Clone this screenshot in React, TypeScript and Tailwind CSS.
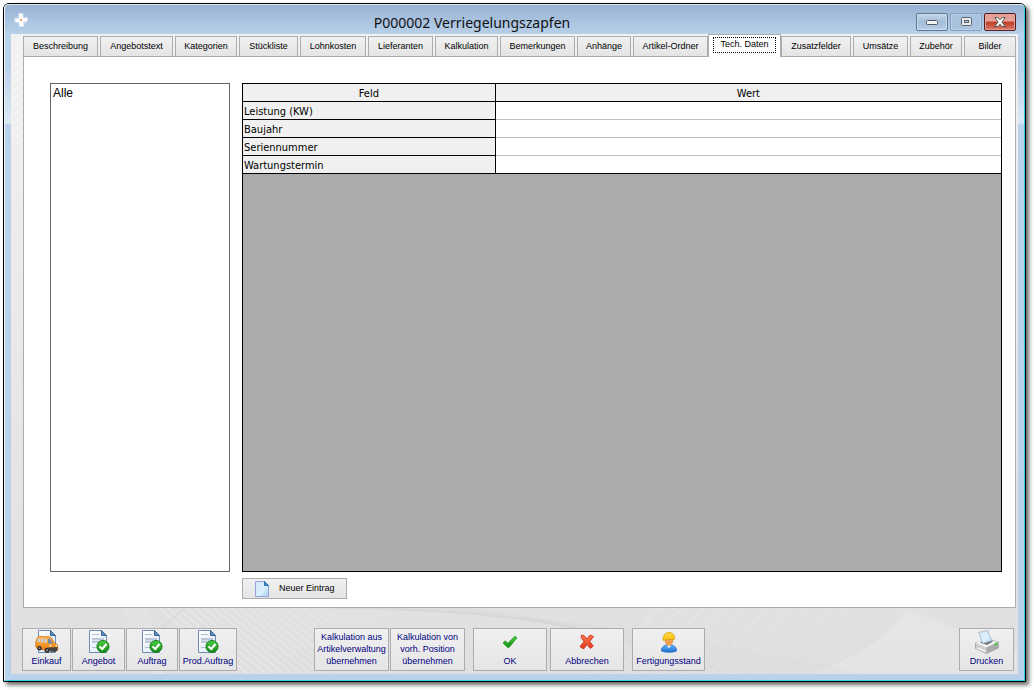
import { useState } from 'react'
import type { ReactNode } from 'react'

const TABS = [
  { label: 'Beschreibung', width: 'basis-[75px]' },
  { label: 'Angebotstext', width: 'basis-[73px]' },
  { label: 'Kategorien', width: 'basis-[62px]' },
  { label: 'Stückliste', width: 'basis-[59px]' },
  { label: 'Lohnkosten', width: 'basis-[66px]' },
  { label: 'Lieferanten', width: 'basis-[65px]' },
  { label: 'Kalkulation', width: 'basis-[63px]' },
  { label: 'Bemerkungen', width: 'basis-[75px]' },
  { label: 'Anhänge', width: 'basis-[54px]' },
  { label: 'Artikel-Ordner', width: 'basis-[75px]' },
  { label: 'Tech. Daten', width: 'basis-[73px]' },
  { label: 'Zusatzfelder', width: 'basis-[70px]' },
  { label: 'Umsätze', width: 'basis-[55px]' },
  { label: 'Zubehör', width: 'basis-[52px]' },
  { label: 'Bilder', width: 'basis-[52px]' },
]

const FIELDS = ['Leistung (KW)', 'Baujahr', 'Seriennummer', 'Wartungstermin']

const SMALL = "font-['Liberation_Sans',sans-serif] text-[9px]"

function AppIcon() {
  return (
    <svg width="14" height="16" viewBox="0 0 14 16" className="shrink-0">
      <path d="M4.500 1h4.500l1 5 4-1v5l-3 1-1 4H5l-1-4-4-1V6l4-1z" fill="#dce8f3" opacity=".7" />
      <path d="M5 2l3.500-.5.5 4.500 4-.5V9l-4 .5.500 4.500-3.500.5-.5-4.500-4 .5V7l4-.5z" fill="#fff" />
      <circle cx="7" cy="8" r="1" fill="#e8792b" />
    </svg>
  )
}

function Sheet() {
  return (
    <>
      <path d="M1.500.5h12l5 5v17h-17z" fill="url(#sheet)" stroke="#6c8cb4" />
      <path d="M13.500.5v5h5z" fill="#5b8fc4" stroke="#3c6493" />
    </>
  )
}

function Gradients() {
  return (
    <svg width="0" height="0" className="absolute" aria-hidden="true">
      <defs>
        <linearGradient id="sheet" x1="0" y1="0" x2="1" y2="1">
          <stop offset="0" stopColor="#ffffff" />
          <stop offset="1" stopColor="#dbe7f5" />
        </linearGradient>
        <linearGradient id="page" x1="0" y1="0" x2="1" y2="1">
          <stop offset="0" stopColor="#d9e6f6" />
          <stop offset=".6" stopColor="#d9f0fd" />
          <stop offset="1" stopColor="#9fcdf3" />
        </linearGradient>
        <linearGradient id="van" x1="0" y1="0" x2="0" y2="1">
          <stop offset="0" stopColor="#ffb84a" />
          <stop offset="1" stopColor="#ee7a10" />
        </linearGradient>
        <linearGradient id="green" x1="0" y1="0" x2="0" y2="1">
          <stop offset="0" stopColor="#4fce45" />
          <stop offset="1" stopColor="#128a18" />
        </linearGradient>
        <linearGradient id="red" x1="0" y1="0" x2="0" y2="1">
          <stop offset="0" stopColor="#ff7a4c" />
          <stop offset="1" stopColor="#e0351a" />
        </linearGradient>
        <linearGradient id="shirt" x1="0" y1="0" x2="0" y2="1">
          <stop offset="0" stopColor="#5fb2f5" />
          <stop offset="1" stopColor="#1c6fd0" />
        </linearGradient>
      </defs>
    </svg>
  )
}

function DocumentCheckIcon() {
  return (
    <svg width="22" height="24" viewBox="0 0 22 24">
      <Sheet />
      <path d="M4 4.500h7M4 17.500h5" stroke="#b4c1d4" />
      <rect x="4" y="8" width="12" height="5" fill="#bcc7da" />
      <path d="M4 10.500h12" stroke="#d9e1ec" />
      <circle cx="15" cy="16.500" r="6" fill="url(#green)" stroke="#0d7a14" />
      <path d="M11.500 16.500l2.800 2.500 4.200-5" fill="none" stroke="#fff" strokeWidth="2.200" />
    </svg>
  )
}

function VanIcon() {
  return (
    <svg width="24" height="24" viewBox="0 0 24 24">
      <g transform="translate(2 0)">
        <Sheet />
      </g>
      <path
        d="M.8 12L2.500 7.500Q3 6.500 4.500 6.400L14 6.800q1.500 0 2.500 1.200l3 5 2.500 1.500q.8 1 .7 2.500v3L20 21.500 3 19 .8 17z"
        fill="url(#van)"
        stroke="#c8660c"
        strokeWidth=".7"
      />
      <path d="M3 8.500h2v3.500H2.200zM6 8.600h2.500V12.500H5.700zM9.500 8.800h2.300v4H9.300z" fill="#c7cfe0" />
      <path d="M13 8.800h2l3.200 4.700H13z" fill="#6f86a8" />
      <path d="M13 17.500l9.500-.5v3.500L20 22l-5-.5z" fill="#454545" />
      <circle cx="4.500" cy="18.200" r="2.300" fill="#2b2b2b" />
      <circle cx="4.500" cy="18.200" r=".9" fill="#9a9a9a" />
      <circle cx="12" cy="20.300" r="2.500" fill="#2b2b2b" />
      <circle cx="12" cy="20.300" r="1" fill="#9a9a9a" />
      <path d="M14.500 15.500l2 .3M20.500 15.800h1.500" stroke="#fff3b0" strokeWidth="1.500" />
    </svg>
  )
}

function PageIcon() {
  return (
    <svg width="14" height="16" viewBox="0 0 14 16">
      <path d="M.5.5h9l4 4v11H.5z" fill="url(#page)" stroke="#9aa2dc" />
      <path d="M9.500.5v4h4z" fill="#3f94cf" stroke="#2f6fae" />
    </svg>
  )
}

function CheckIcon() {
  return (
    <svg width="16" height="14" viewBox="0 0 16 14">
      <path
        d="M1 8l2-2.200 3 2.400L12.800 1.200l2.200 1.600-8 9.700H5.800z"
        fill="url(#green)"
        stroke="#1a9d1c"
        strokeWidth=".8"
        strokeLinejoin="round"
      />
    </svg>
  )
}

function CrossIcon() {
  return (
    <svg width="16" height="16" viewBox="0 0 16 16">
      <path
        d="M2.500 1.200l2.500.3L8 5l3-4 3.500 1.500L10.800 7.500l3.500 4.500-2.800 2.500L8 10.500 4.500 15 1 12.500l4-5L2 3.500z"
        fill="url(#red)"
        stroke="#c3260f"
        strokeWidth=".8"
        strokeLinejoin="round"
      />
    </svg>
  )
}

function WorkerIcon() {
  return (
    <svg width="18" height="21" viewBox="0 0 18 21">
      <path d="M1.500 19c-.5-3 2-5.500 5-6h5c3 .5 5.500 3 5 6-4 1.700-11 1.700-15 0z" fill="url(#shirt)" stroke="#1c62b8" strokeWidth=".7" />
      <path d="M6.500 12.500h5L9 16.500z" fill="#e8f2fc" />
      <path d="M5 6.500h8c.3 4-1.500 7-4 7s-4.300-3-4-7z" fill="#f2a050" stroke="#c97a2c" strokeWidth=".5" />
      <path d="M3 8.500C2.700 4 5 .5 9 .5c4 0 6.300 3 5.500 7-3-.5-7-.5-11.500 1z" fill="#fbcb1f" stroke="#d29a0c" strokeWidth=".7" />
      <path d="M7 1.500l-.5 3M10 1.500v3" stroke="#ffe97a" />
    </svg>
  )
}

function PrinterIcon() {
  return (
    <svg width="26" height="24" viewBox="0 0 26 24">
      <path d="M1.500 13l10-4 13 3v6l-12 5.500-11-5z" fill="#cdcdcd" stroke="#8a8a8a" strokeWidth=".6" />
      <path d="M1.500 13l7-3.500 16 2.500-12 5.500z" fill="#f2f2f2" />
      <path d="M12.500 17.500l12-5.500v6l-12 5.500z" fill="#a9a9a9" />
      <path d="M6 12.500l7 2.500 6-3.500-7-2z" fill="#6a737c" />
      <path d="M4.500 2.500L14 .5c.5 4 1.500 7 4.500 10L9 13.500C6.500 10 7 6 4.500 2.500z" fill="url(#page)" stroke="#8c9cb0" strokeWidth=".6" />
      <path d="M3 18l8.500 3.500" stroke="#f5f5f5" strokeWidth="1.500" />
      <path d="M20.500 14.500l2.500-1" stroke="#2ed32e" strokeWidth="2" />
    </svg>
  )
}

// faint crossing lines behind the bottom tool bar
function Pattern() {
  const steps = Array.from({ length: 30 }, (_, i) => i)
  return (
    <svg
      className="absolute inset-0 -z-10 h-full w-full"
      viewBox="0 0 1007 65"
      preserveAspectRatio="none"
      fill="none"
      aria-hidden="true"
    >
      <path d="M895 0l112 45V65H800C840 50 880 30 895 0z" fill="#e7e7e7" opacity=".6" />
      <g stroke="#ebebeb">
        {steps.map((i) => (
          <path key={i} d={`M${148 + i * 9} 0l80 65`} opacity={1 - i / 32} />
        ))}
        {steps.slice(0, 9).map((i) => (
          <path key={i} d={`M${112 + i * 3} 0l${32 - i * 2} 65`} opacity=".6" />
        ))}
        {steps.slice(0, 12).map((i) => (
          <path key={i} d={`M${650 + i * 21} 0l${-70 + i * 3} 65`} opacity={1 - i / 13} />
        ))}
      </g>
      <g stroke="#d6d6d6">
        <path d="M150 20L174 0" />
        {steps.slice(0, 14).map((i) => (
          <path key={i} d={`M${300 + i * 12} 0C${480 + i * 8} ${i} 600 ${14 + i * 2} ${850 - i * 9} 65`} opacity=".3" />
        ))}
      </g>
    </svg>
  )
}

// diagonal stripes along the upper left edge
function EdgePattern() {
  const steps = Array.from({ length: 14 }, (_, i) => i)
  return (
    <svg className="absolute left-0 top-0 -z-10" width="12" height="110" fill="none" aria-hidden="true">
      {steps.map((i) => (
        <path key={i} d={`M0 ${10 + i * 8}l12-8`} stroke="#fafafa" />
      ))}
    </svg>
  )
}

interface ToolButtonProps {
  width: string
  icon?: ReactNode
  children: ReactNode
}

function ToolButton({ width, icon, children }: ToolButtonProps) {
  return (
    <button
      className={`${SMALL} ${width} flex h-[43px] shrink-0 flex-col items-center justify-end whitespace-nowrap border border-[#acacac] bg-gradient-to-b from-[#f0f0f0] to-[#e5e5e5] pb-[3px] leading-3 text-[#000080]`}
    >
      {icon && <span className="flex flex-1 items-center justify-center">{icon}</span>}
      <span>{children}</span>
    </button>
  )
}

function TitleBar() {
  return (
    <header className="flex h-[29px] items-center pl-[9px] pr-2">
      <AppIcon />
      <h1 className="flex-1 pt-1.5 text-center font-['Noto_Sans',sans-serif] text-[14px] leading-5 text-[#111]">
        P000002 Verriegelungszapfen
      </h1>
      <div className="flex gap-0.5 pt-1">
        <button
          aria-label="Minimieren"
          className="flex h-[18px] w-8 items-center justify-center rounded-xs border border-[#5f7895] bg-gradient-to-b from-[#c3d5e8] via-[#a5bdd7] to-[#b7cfe8] pt-0.5 shadow-[inset_0_0_0_1px_#c8daec]"
        >
          <svg width="12" height="5" viewBox="0 0 12 5">
            <rect x=".5" y=".5" width="11" height="4" rx="1" fill="#f4f4f4" stroke="#4e5461" />
          </svg>
        </button>
        <button
          aria-label="Maximieren"
          className="flex h-[18px] w-8 items-center justify-center rounded-xs border border-[#84a0c0] bg-[#a9c2de] shadow-[inset_0_0_0_1px_#bcd1e8]"
        >
          <svg width="11" height="9" viewBox="0 0 11 9">
            <rect x=".5" y=".5" width="10" height="8" rx="1" fill="#e8e8e8" stroke="#5b6472" />
            <rect x="3.500" y="3.500" width="4" height="2" fill="#a9c2de" stroke="#5b6472" />
          </svg>
        </button>
        <button
          aria-label="Schließen"
          className="flex h-[18px] w-8 items-center justify-center rounded-xs border border-[#5a1a24] bg-gradient-to-b from-[#e5a196] from-45% via-[#bc3a26] via-50% to-[#d97a66] shadow-[inset_0_0_0_1px_#e0a094]"
        >
          <svg width="12" height="10" viewBox="0 0 12 10">
            <path
              d="M.8.5h3L6 2.800 8.200.5h3L8 5l3.200 4.500h-3L6 7.200 3.800 9.500h-3L4 5z"
              fill="#f5f5f5"
              stroke="#4a4f5e"
              strokeWidth=".9"
            />
          </svg>
        </button>
      </div>
    </header>
  )
}

export default function App() {
  const [active, setActive] = useState('Tech. Daten')

  return (
    <div className="flex min-h-screen flex-col bg-white pb-2 pl-[3px] pr-2 pt-[3px]">
      <Gradients />
      <div className="flex flex-1 flex-col rounded-t-md border border-black shadow-[3px_3px_4px_0px_rgba(0,0,0,0.6)]">
        <div className="flex flex-1 flex-col rounded-t-[5px] border border-b-[#2fd3e6] border-l-[#eef4fa] border-r-[#2fd3e6] border-t-[#dce8f4] bg-[#b9d1ea] bg-[linear-gradient(#98b2d2,#b9d1ea_30px,#b9d1ea_60px,#dce8f5_118px,#b9d1ea_120px)]">
          <TitleBar />
          <main className="relative isolate mx-1.5 mb-1.5 flex flex-1 flex-col bg-gradient-to-b from-[#f2f2f2] to-[#dfdfdf]">
            <EdgePattern />
            <nav role="tablist" className="flex h-[22px] items-end gap-0.5 pl-3 pr-0.5">
              {TABS.map((tab) =>
                tab.label === active ? (
                  <button
                    key={tab.label}
                    role="tab"
                    aria-selected="true"
                    className={`${SMALL} ${tab.width} z-10 -mx-0.5 -mb-px h-[23px] min-w-0 grow whitespace-nowrap border border-b-0 border-[#acacac] bg-white px-1 pb-1 pt-0.5`}
                  >
                    <span className="flex h-full items-center justify-center border border-dotted border-black">
                      {tab.label}
                    </span>
                  </button>
                ) : (
                  <button
                    key={tab.label}
                    role="tab"
                    aria-selected="false"
                    onClick={() => setActive(tab.label)}
                    className={`${SMALL} ${tab.width} h-5 min-w-0 grow whitespace-nowrap border border-b-0 border-[#acacac] bg-gradient-to-b from-[#f1f1f1] to-[#e4e4e4] pt-px`}
                  >
                    {tab.label}
                  </button>
                ),
              )}
            </nav>

            <section
              role="tabpanel"
              className="ml-3 mr-0.5 grid flex-1 grid-cols-[180px_1fr] grid-rows-[1fr_auto] gap-x-3 gap-y-1.5 border border-[#acacac] bg-white pb-2 pl-[26px] pr-[13px] pt-[26px] font-['DejaVu_Sans_Condensed','Noto_Sans',sans-serif] text-[11px]"
            >
              <ul className="border border-[#646464] px-0.5 py-px font-['Liberation_Sans',sans-serif] text-xs leading-4">
                <li>Alle</li>
              </ul>

              <div className="border border-black bg-[#ababab]">
                <table className="w-full table-fixed border-separate border-spacing-0 leading-[15px]">
                  <thead>
                    <tr>
                      <th className="h-[18px] w-1/3 border-b border-r border-black bg-[#f0f0f0] p-0 pt-0.5 font-normal">
                        Feld
                      </th>
                      <th className="border-b border-black bg-[#f0f0f0] p-0 pt-0.5 font-normal">Wert</th>
                    </tr>
                  </thead>
                  <tbody>
                    {FIELDS.map((field) => (
                      <tr key={field} className="group">
                        <th className="h-[18px] border-b border-r border-black bg-[#f0f0f0] p-0 pl-px pt-0.5 text-left font-normal">
                          {field}
                        </th>
                        <td className="border-b border-[#c0c0c0] bg-white p-0 group-last:border-black" />
                      </tr>
                    ))}
                  </tbody>
                </table>
              </div>

              <button
                className={`${SMALL} col-start-2 flex h-[21px] w-[105px] items-center gap-2.5 border border-[#acacac] bg-gradient-to-b from-[#f1f1f1] to-[#e4e4e4] pl-3`}
              >
                <PageIcon />
                Neuer Eintrag
              </button>
            </section>

            <footer className="relative isolate flex h-[66px] items-end pb-[3px] pl-[11px] pr-1">
              <Pattern />
              <div className="flex gap-px">
                <ToolButton width="w-[49px]" icon={<VanIcon />}>Einkauf</ToolButton>
                <ToolButton width="w-[53px]" icon={<DocumentCheckIcon />}>Angebot</ToolButton>
                <ToolButton width="w-[52px]" icon={<DocumentCheckIcon />}>Auftrag</ToolButton>
                <ToolButton width="w-[58px]" icon={<DocumentCheckIcon />}>Prod.Auftrag</ToolButton>
              </div>
              <div className="ml-[77px] flex gap-px">
                <ToolButton width="w-[75px]">
                  Kalkulation aus
                  <br />
                  Artikelverwaltung
                  <br />
                  übernehmen
                </ToolButton>
                <ToolButton width="w-[75px]">
                  Kalkulation von
                  <br />
                  vorh. Position
                  <br />
                  übernehmen
                </ToolButton>
              </div>
              <div className="ml-2 flex gap-[3px]">
                <ToolButton width="w-[74px]" icon={<CheckIcon />}>OK</ToolButton>
                <ToolButton width="w-[74px]" icon={<CrossIcon />}>Abbrechen</ToolButton>
              </div>
              <div className="ml-2 flex">
                <ToolButton width="w-[73px]" icon={<WorkerIcon />}>Fertigungsstand</ToolButton>
              </div>
              <div className="ml-auto flex">
                <ToolButton width="w-[55px]" icon={<PrinterIcon />}>Drucken</ToolButton>
              </div>
            </footer>
          </main>
        </div>
      </div>
    </div>
  )
}
